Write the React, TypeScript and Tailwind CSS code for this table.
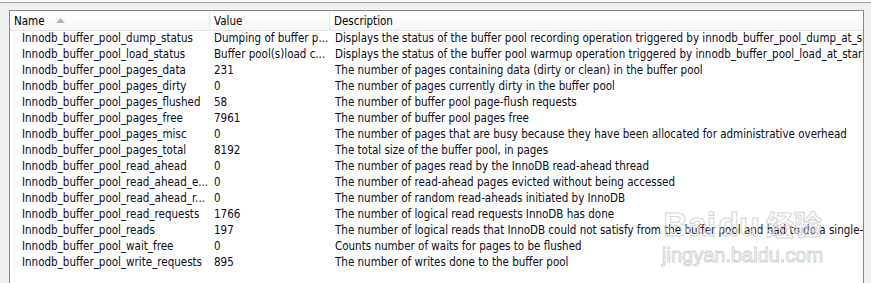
const rows: [string, string, string][] = [
  ['Innodb_buffer_pool_dump_status', 'Dumping of buffer p...', 'Displays the status of the buffer pool recording operation triggered by innodb_buffer_pool_dump_at_shutdown'],
  ['Innodb_buffer_pool_load_status', 'Buffer pool(s)load c...', 'Displays the status of the buffer pool warmup operation triggered by innodb_buffer_pool_load_at_startup'],
  ['Innodb_buffer_pool_pages_data', '231', 'The number of pages containing data (dirty or clean) in the buffer pool'],
  ['Innodb_buffer_pool_pages_dirty', '0', 'The number of pages currently dirty in the buffer pool'],
  ['Innodb_buffer_pool_pages_flushed', '58', 'The number of buffer pool page-flush requests'],
  ['Innodb_buffer_pool_pages_free', '7961', 'The number of buffer pool pages free'],
  ['Innodb_buffer_pool_pages_misc', '0', 'The number of pages that are busy because they have been allocated for administrative overhead'],
  ['Innodb_buffer_pool_pages_total', '8192', 'The total size of the buffer pool, in pages'],
  ['Innodb_buffer_pool_read_ahead', '0', 'The number of pages read by the InnoDB read-ahead thread'],
  ['Innodb_buffer_pool_read_ahead_e...', '0', 'The number of read-ahead pages evicted without being accessed'],
  ['Innodb_buffer_pool_read_ahead_r...', '0', 'The number of random read-aheads initiated by InnoDB'],
  ['Innodb_buffer_pool_read_requests', '1766', 'The number of logical read requests InnoDB has done'],
  ['Innodb_buffer_pool_reads', '197', 'The number of logical reads that InnoDB could not satisfy from the buffer pool and had to do a single-page read'],
  ['Innodb_buffer_pool_wait_free', '0', 'Counts number of waits for pages to be flushed'],
  ['Innodb_buffer_pool_write_requests', '895', 'The number of writes done to the buffer pool'],
];

export default function App() {
  return (
    <div className="w-[871px] h-[283px] bg-[#f0f0f0] overflow-hidden font-['DejaVu_Sans_Condensed','Liberation_Sans',sans-serif] text-[11.5px]">
      <div className="h-[3px] bg-[#f7f7f7] border-b border-[#a0a0a0]" />
      <div className="pt-[7px] pl-[9px] pr-[7px]">
        <div className="relative h-[290px] bg-white border-l border-t border-r border-[#828790] overflow-hidden">
          {/* header */}
          <div className="flex h-[20px] items-center border-b border-[#e5e5e5] bg-gradient-to-b from-white to-[#f7f8f9] text-black">
            <div className="w-[200px] h-full flex items-center pl-[4px] pt-[2px] border-r border-[#e5e5e5]">
              <span>Name</span>
              <svg width="9" height="5" viewBox="0 0 9 5" className="ml-[11px] mb-[2px]">
                <polygon points="0,5 4.5,0 9,5" fill="#b4b4b4" />
              </svg>
            </div>
            <div className="w-[120px] h-full flex items-center pl-[4px] pt-[2px] border-r border-[#e5e5e5]">Value</div>
            <div className="flex-1 h-full flex items-center pl-[4px] pt-[2px]">Description</div>
          </div>
          {/* rows */}
          {rows.map(([name, value, desc]) => (
            <div key={name} className="flex h-[16px] items-center text-[#0a0a1e] whitespace-nowrap">
              <div className="w-[200px] pl-[12px] overflow-hidden">{name}</div>
              <div className="w-[120px] pl-[4px] overflow-hidden">{value}</div>
              <div className="flex-1 pl-[5px] overflow-hidden">{desc}</div>
            </div>
          ))}
          {/* watermark */}
          <div className="absolute left-[652px] top-[196px] flex flex-col items-center text-transparent [-webkit-text-stroke:1px_#d4d4d4] pointer-events-none font-['Liberation_Sans',sans-serif]">
            <div className="flex items-baseline gap-[2px] text-[34px] leading-none font-bold">
              <span>Bai</span>
              <span>du</span>
              <span className="font-['Noto_Sans_CJK_SC',sans-serif] text-[28px] ml-[4px]">经验</span>
            </div>
            <div className="text-[20px] leading-none mt-[4px]">jingyan.baidu.com</div>
          </div>
        </div>
      </div>
    </div>
  );
}
